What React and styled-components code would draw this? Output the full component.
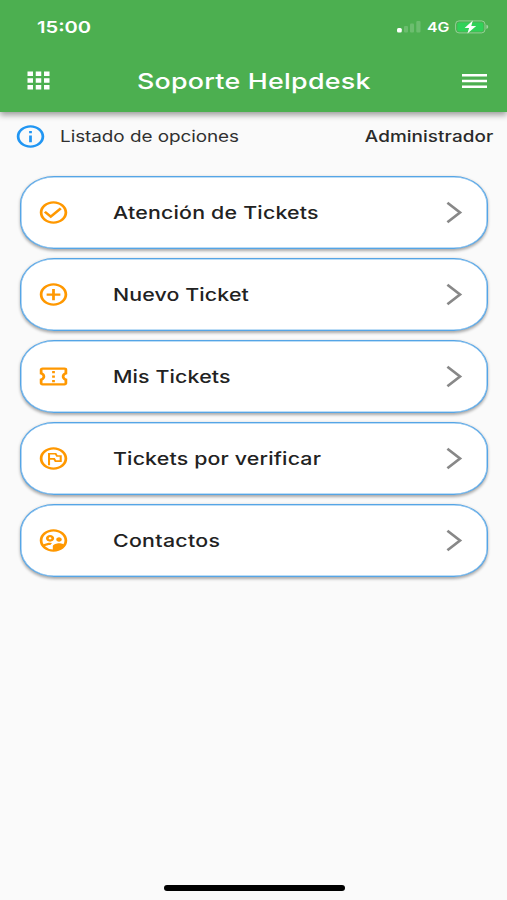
import React from 'react'
import styled, { createGlobalStyle } from 'styled-components'
import {
    MdApps,
    MdInfoOutline,
    MdCheckCircleOutline,
    MdAddCircleOutline,
    MdOutlineConfirmationNumber,
    MdOutlineFlagCircle,
    MdOutlineSupervisedUserCircle
} from 'react-icons/md'

const options = [
    { id: 1, title: 'Atención de Tickets', icon: MdCheckCircleOutline, spacing: 0.17 },
    { id: 2, title: 'Nuevo Ticket', icon: MdAddCircleOutline, spacing: 0.1 },
    { id: 3, title: 'Mis Tickets', icon: MdOutlineConfirmationNumber, spacing: 0.1 },
    { id: 4, title: 'Tickets por verificar', icon: MdOutlineFlagCircle, spacing: 0.13 },
    { id: 5, title: 'Contactos', icon: MdOutlineSupervisedUserCircle, spacing: 0.23 }
]

const App = () => {
    return (
        <Screen>
            <GlobalStyle />
            <Header>
                <StatusBar>
                    <Clock>15:00</Clock>
                    <StatusIcons>
                        <Signal />
                        <Network>4G</Network>
                        <Battery />
                    </StatusIcons>
                </StatusBar>
                <Toolbar>
                    <AppsIcon preserveAspectRatio="none" />
                    <Title>Soporte Helpdesk</Title>
                    <MenuIcon />
                </Toolbar>
            </Header>
            <InfoRow>
                <InfoIcon preserveAspectRatio="none" />
                <InfoText>Listado de opciones</InfoText>
                <Role>Administrador</Role>
            </InfoRow>
            <List>
                {
                    options.map(({ id, title, icon, spacing }) => (
                        <Card key={id}>
                            <CardIcon as={icon} preserveAspectRatio="none" />
                            <CardTitle $spacing={spacing}>{title}</CardTitle>
                            <Chevron />
                        </Card>
                    ))
                }
            </List>
            <HomeBar />
        </Screen>
    )
}

const Signal = () => (
    <svg width="24" height="13" viewBox="0 0 24 13">
        <rect x="0" y="8" width="4.8" height="4.5" rx="1.5" fill="#fff" />
        <rect x="7" y="6" width="4" height="6.5" rx="1" fill="#fff" opacity=".18" />
        <rect x="13" y="3.5" width="4" height="9" rx="1" fill="#fff" opacity=".18" />
        <rect x="19.3" y="1" width="4.2" height="11.5" rx="1" fill="#fff" opacity=".18" />
    </svg>
)

const Battery = () => (
    <svg width="34" height="14" viewBox="0 0 34 14">
        <rect x=".6" y=".9" width="29.4" height="12" rx="3.4" fill="none" stroke="#fff" strokeOpacity=".4" />
        <rect x="2.3" y="2.4" width="26" height="9" rx="2" fill="#30d158" />
        <path d="M31.4 4.8c2.4.6 2.4 3.6 0 4.2z" fill="#fff" opacity=".45" />
        <path d="M17.8.4 9.6 7.9h4.5L12.4 13.6 21.2 6h-4.9z" fill="#fff" />
    </svg>
)

const MenuIcon = () => (
    <svg width="25" height="14" viewBox="0 0 25 14">
        <path d="M0 1.3h25M0 7h25M0 12.7h25" stroke="#fff" strokeWidth="2.4" />
    </svg>
)

const Chevron = () => (
    <svg width="17" height="24" viewBox="0 0 17 24">
        <path d="M1.4 1.7 14 11.5 1.4 21.3" fill="none" stroke="#888" strokeWidth="2.7" />
    </svg>
)

export default App

const GlobalStyle = createGlobalStyle`
    * {
        box-sizing: border-box;
    }
    body {
        margin: 0;
        background: #fafafa;
        font-family: Inter, "Liberation Sans", sans-serif;
    }
    svg {
        display: block;
        flex-shrink: 0;
    }
`
const Screen = styled.div`
    width: 507px;
    height: 900px;
    display: flex;
    flex-direction: column;
    background: #fafafa;
    overflow: hidden;
`
const Header = styled.div`
    height: 112px;
    background: #4caf50;
    color: white;
    box-shadow: 0 3px 6px rgba(0, 0, 0, 0.38);
`
const StatusBar = styled.div`
    height: 50px;
    padding: 3px 18px 0 37px;
    display: flex;
    align-items: center;
    justify-content: space-between;
`
/* wide lettering shared by every label */
const Wide = styled.div`
    white-space: nowrap;
    transform: scaleX(1.22);
    transform-origin: left center;
`
const Clock = styled(Wide)`
    font-size: 16.5px;
    font-weight: 600;
`
const StatusIcons = styled.div`
    display: flex;
    align-items: center;
`
const Network = styled(Wide)`
    width: 28px;
    margin-left: 6px;
    font-size: 13px;
    font-weight: 600;
`
const Toolbar = styled.div`
    height: 61px;
    padding: 0 20px 0 22px;
    display: flex;
    align-items: center;
    justify-content: space-between;
`
const AppsIcon = styled(MdApps)`
    width: 33px;
    height: 27px;
`
const Title = styled(Wide)`
    margin-right: 9px;
    font-size: 22px;
    font-weight: 500;
    letter-spacing: 0.2px;
    transform-origin: center;
`
const InfoRow = styled.div`
    height: 48px;
    padding: 0 14px;
    display: flex;
    align-items: center;
`
const InfoIcon = styled(MdInfoOutline)`
    width: 33px;
    height: 27px;
    color: #2196f3;
`
const InfoText = styled(Wide)`
    margin-left: 12.5px;
    font-size: 15.5px;
    letter-spacing: -0.05px;
    color: #303030;
`
const Role = styled(Wide)`
    margin-left: auto;
    font-size: 15.5px;
    font-weight: 550;
    letter-spacing: 0.05px;
    color: #2a2a2a;
    transform-origin: right center;
`
const List = styled.div`
    padding: 16px 19px 0 20px;
    display: flex;
    flex-direction: column;
    gap: 9px;
`
const Card = styled.div`
    height: 73px;
    padding: 0 24px 0 16px;
    display: flex;
    align-items: center;
    background: white;
    border: 1px solid #55a5e6;
    border-radius: 34px / 28px;
    box-shadow: inset 0 0 0 0.6px #7dbbee, 0 1.5px 3px rgba(0, 0, 0, 0.32);
`
const CardIcon = styled.svg`
    width: 33px;
    height: 27px;
    color: #ff9800;
`
const CardTitle = styled(Wide)`
    flex: 1;
    margin-left: 43px;
    font-size: 17.5px;
    font-weight: 500;
    letter-spacing: ${({ $spacing }) => $spacing}px;
    color: #222;
`
const HomeBar = styled.div`
    width: 181px;
    height: 6px;
    margin: auto auto 9px 163.5px;
    border-radius: 3px;
    background: black;
`
